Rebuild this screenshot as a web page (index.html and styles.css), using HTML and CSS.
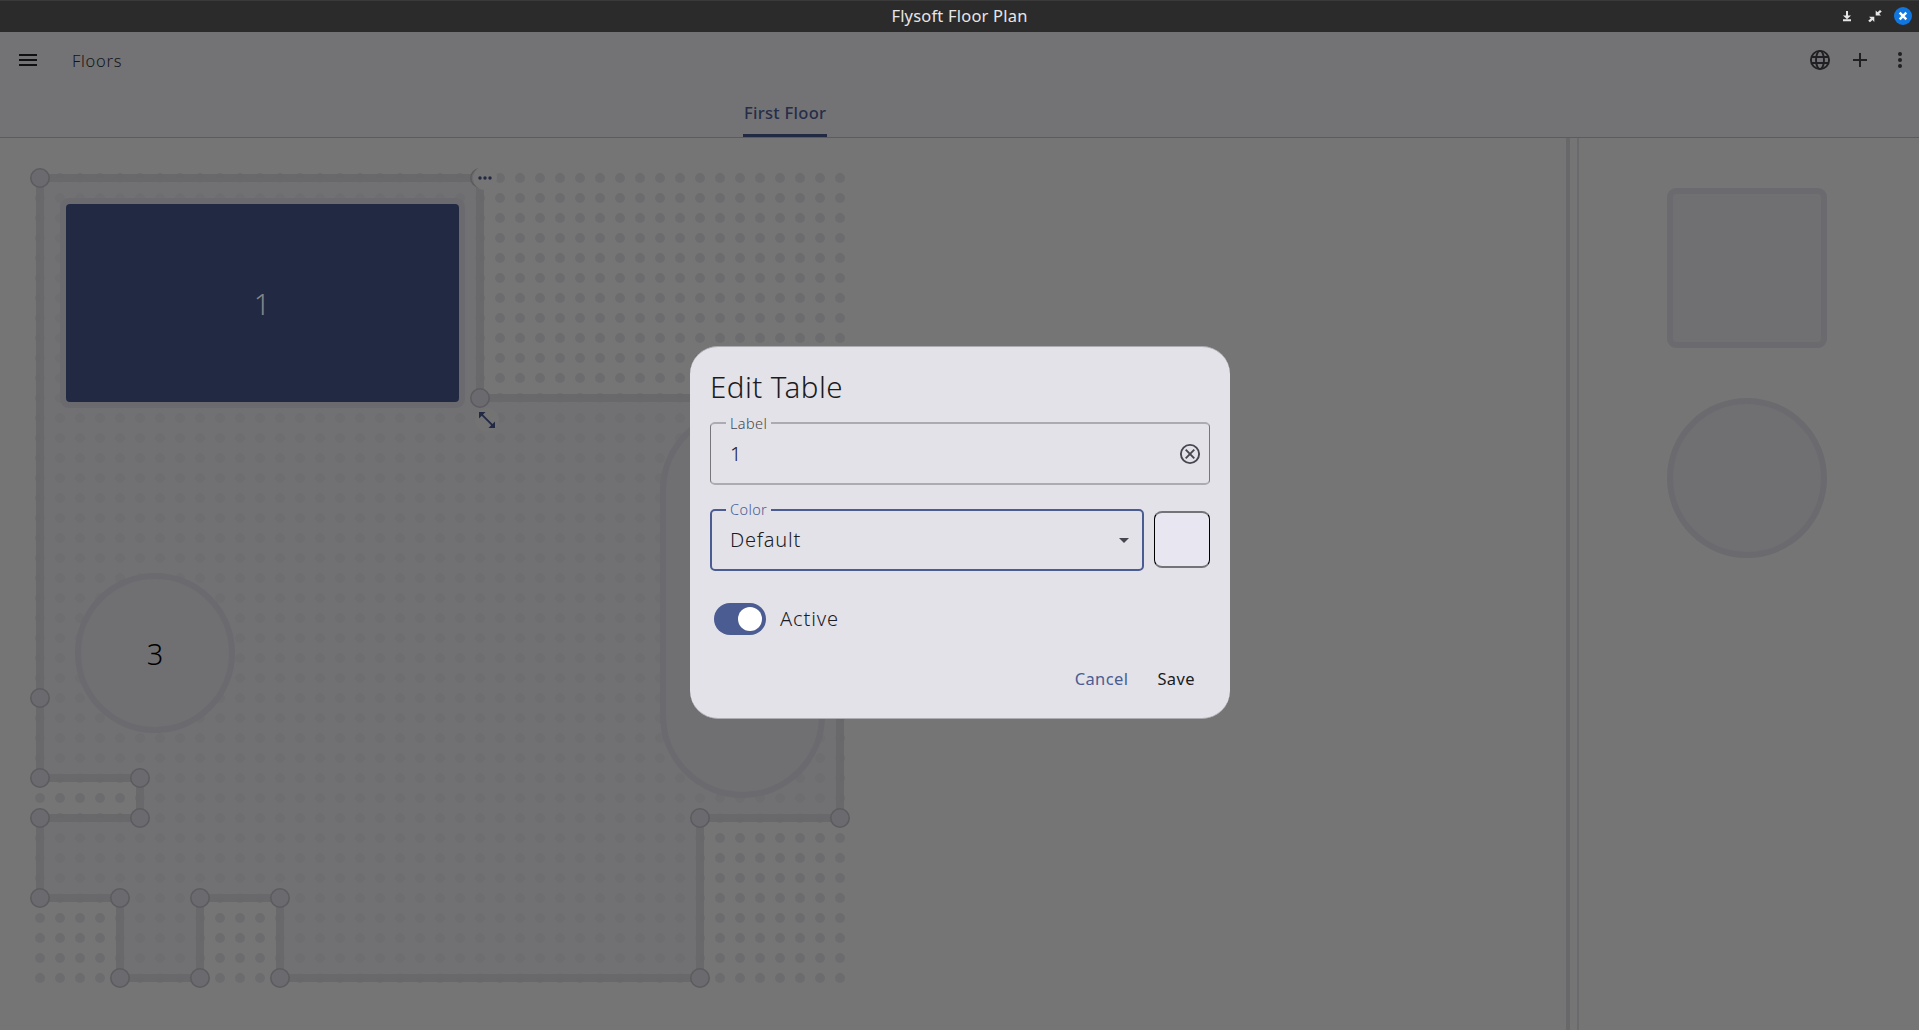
FILE: index.html
```html
<!DOCTYPE html>
<html lang="en">
<head>
<meta charset="utf-8">
<title>Flysoft Floor Plan</title>
<link rel="stylesheet" href="styles.css">
</head>
<body>
<header class="titlebar">
  <span class="titlebar-name">Flysoft Floor Plan</span>
  <div class="window-controls">
    <svg width="18" height="18" viewBox="0 0 18 18"><path d="M8 4h2v4.500h3L9 12.300 5 8.500h3zM5 12.300h8v2H5z"/></svg>
    <svg width="18" height="18" viewBox="0 0 18 18"><path d="M9.700 3.500v5h5.300L13.200 6.800 15.800 4.500 14 3 11.500 5.200zM8.300 15v-5.300H3L4.800 11.400 2.200 13.700 4 15.200 6.500 13z"/></svg>
    <svg width="18" height="18" viewBox="0 0 18 18"><circle class="close-disc" cx="9" cy="9" r="9"/><path class="close-mark" d="M5.700 5.700l6.600 6.600M12.300 5.700l-6.600 6.600"/></svg>
  </div>
</header>
<nav class="appbar">
  <div class="toolbar">
    <svg class="icon" width="24" height="24" viewBox="0 0 24 24"><path d="M3 18h18v-2H3v2zm0-5h18v-2H3v2zm0-7v2h18V6H3z"/></svg>
    <span class="toolbar-title">Floors</span>
    <div class="actions">
      <svg class="icon globe" width="24" height="24" viewBox="0 0 24 24"><circle cx="12" cy="12" r="9.100"/><ellipse cx="12" cy="12" rx="4" ry="9.100"/><path d="M3.500 9h17M3.500 15h17"/></svg>
      <svg class="icon" width="24" height="24" viewBox="0 0 24 24"><path d="M19 13h-6v6h-2v-6H5v-2h6V5h2v6h6v2z"/></svg>
      <svg class="icon" width="24" height="24" viewBox="0 0 24 24"><circle cx="12" cy="6" r="2"/><circle cx="12" cy="12" r="2"/><circle cx="12" cy="18" r="2"/></svg>
    </div>
  </div>
  <div class="tabs"><div class="tab"><span class="tab-text">First Floor</span></div></div>
</nav>
<main class="workspace">
  <svg class="plan" width="1566" height="892" viewBox="0 138 1566 892">
    <defs>
      <pattern id="dots" x="30" y="168" width="20" height="20" patternUnits="userSpaceOnUse"><circle class="dot" cx="10" cy="10" r="5"/></pattern>
    </defs>
    <rect x="30" y="168" width="820" height="820" fill="url(#dots)"/>
    <path class="floor" d="M40 178H480V398H840V818H700V978H280V898H200V978H120V898H40V818H140V778H40Z"/>
    <g class="nodes">
      <circle cx="40" cy="178" r="9.200"/><circle cx="480" cy="178" r="9.200"/><circle cx="480" cy="398" r="9.200"/>
      <circle cx="840" cy="818" r="9.200"/><circle cx="700" cy="818" r="9.200"/><circle cx="700" cy="978" r="9.200"/>
      <circle cx="280" cy="978" r="9.200"/><circle cx="280" cy="898" r="9.200"/><circle cx="200" cy="898" r="9.200"/>
      <circle cx="200" cy="978" r="9.200"/><circle cx="120" cy="978" r="9.200"/><circle cx="120" cy="898" r="9.200"/>
      <circle cx="40" cy="898" r="9.200"/><circle cx="40" cy="818" r="9.200"/><circle cx="140" cy="818" r="9.200"/>
      <circle cx="140" cy="778" r="9.200"/><circle cx="40" cy="778" r="9.200"/><circle cx="40" cy="698" r="9.200"/>
    </g>
    <rect class="table-edge" x="60" y="198" width="405" height="210" rx="9"/>
    <rect class="table-selected" x="66" y="204" width="393" height="198" rx="4"/>
    <text class="table-label on-selected" x="262" y="315">1</text>
    <circle class="table" cx="155" cy="653" r="77"/>
    <text class="table-label" x="155" y="665">3</text>
    <rect class="table" x="663" y="411" width="159" height="384" rx="79.500"/>
    <circle class="handle" cx="485" cy="178" r="12"/>
    <g class="handle-icon"><circle cx="480" cy="178" r="1.700"/><circle cx="485" cy="178" r="1.700"/><circle cx="490" cy="178" r="1.700"/></g>
    <circle class="handle soft" cx="487" cy="420" r="12"/>
    <path class="handle-icon" d="M479 412h6.500l-2.500 2.500 9.500 9.500L495 421.500v6.500h-6.500l2.700-2.700-9.500-9.500L479 418.500z"/>
  </svg>
  <div class="splitter"></div>
  <aside class="palette">
    <div class="shape square"></div>
    <div class="shape round"></div>
  </aside>
</main>
<section class="dialog">
  <h1 class="dialog-title"><span>Edit Table</span></h1>
  <div class="field label-field">
    <span class="field-name name-label">Label</span>
    <span class="value">1</span>
    <svg class="clear" width="24" height="24" viewBox="0 0 24 24"><circle cx="12" cy="12" r="9.100"/><path d="M7.700 7.700l8.600 8.600M16.300 7.700l-8.600 8.600"/></svg>
  </div>
  <div class="color-row">
    <div class="field color-field">
      <span class="field-name name-color">Color</span>
      <span class="value value-default">Default</span>
      <svg width="10" height="5" viewBox="0 0 10 5"><path class="caret" d="M0 0h10L5 5z"/></svg>
    </div>
    <div class="swatch"></div>
  </div>
  <div class="switch-row">
    <div class="switch"><div class="thumb"></div></div>
    <span class="switch-text">Active</span>
  </div>
  <div class="buttons"><span class="cancel">Cancel</span><span class="save">Save</span></div>
</section>
</body>
</html>
```
FILE: styles.css
```css
* { box-sizing: border-box; }
body {
  margin: 0;
  width: 1919px;
  height: 1030px;
  overflow: hidden;
  display: flex;
  flex-direction: column;
  background: #757575;
  font-family: "Noto Sans", sans-serif;
  color: #1b1b21;
}
svg { display: block; flex: none; }
span { white-space: nowrap; }

.titlebar {
  height: 32px;
  flex: none;
  background: #2b2b2b;
  border-top: 1px solid #3a3a3a;
  display: grid;
  grid-template-columns: 1fr auto 1fr;
  align-items: center;
}
.titlebar-name { grid-column: 2; color: #e6e6e6; font-size: 16.500px; letter-spacing: 0.2px; line-height: 28px; padding-bottom: 2px; }
.window-controls { justify-self: end; display: flex; gap: 10px; padding: 0 7px 1px 0; fill: #e6e6e6; }
.close-disc { fill: #1177e0; }
.close-mark { stroke: #fff; stroke-width: 2.400; }

.appbar {
  height: 106px;
  flex: none;
  background: #737375;
  border-bottom: 1px solid #5b5b60;
  display: flex;
  flex-direction: column;
}
.toolbar { height: 56px; display: flex; align-items: center; padding: 0 7px 0 16px; }
.icon { fill: #101013; }
.toolbar-title { margin-left: 32px; padding-top: 1px; font-size: 16.500px; font-weight: 350; letter-spacing: 0.7px; color: #151518; }
.actions { margin-left: auto; display: flex; gap: 16px; }
.actions .icon { fill: #202024; }
.actions .globe { fill: none; stroke: #202024; stroke-width: 1.900; }
.tabs { height: 49px; padding-left: 743px; display: flex; }
.tab { width: 84px; border-bottom: 3px solid #222943; display: flex; justify-content: center; align-items: center; }
.tab-text { padding-top: 4px; color: #262d49; font-size: 16.500px; font-weight: 500; letter-spacing: 0.3px; margin-right: -0.300px; line-height: 42px; }

.workspace { flex: 1; display: flex; min-height: 0; }
.plan { background: #757575; }
.dot { fill: #6c6c6e; }
.floor { fill: #707073; fill-opacity: 0.620; stroke: #68686a; stroke-opacity: 0.920; stroke-width: 8; }
.nodes circle { fill: #6b6a6f; stroke: #5c5c60; stroke-width: 1.600; }
.table { fill: #707072; stroke: #6b6a6f; stroke-width: 6; }
.table-edge { fill: #6b6a6f; }
.table-selected { fill: #222943; }
.table-label { font-size: 29px; font-weight: 350; text-anchor: middle; fill: #000; }
.on-selected { fill: #858587; }
.handle { fill: #757575; }
.soft { fill: #737374; }
.handle-icon { fill: #222943; }

.splitter { width: 13px; flex: none; border-left: 4px solid #68686a; border-right: 2px solid #6a6a6c; }
.palette { flex: 1; display: flex; flex-direction: column; align-items: center; gap: 50px; padding: 50px 5px 0 0; }
.shape { width: 160px; height: 160px; background: #707072; border: 6px solid #6b6a6f; }
.square { border-radius: 9px; }
.round { border-radius: 50%; }

.dialog {
  position: absolute;
  left: 690px;
  top: 346px;
  width: 540px;
  height: 373px;
  padding: 20px;
  border-radius: 28px;
  background: #e3e2e9;
  border-top: 1px solid #adacb0;
  border-bottom: 1px solid #adacb0;
}
.dialog-title { margin: 0; height: 55px; font-size: 29.500px; font-weight: 320; letter-spacing: 0.45px; line-height: 40px; }
.field {
  position: relative;
  height: 63px;
  border-radius: 5px;
  display: flex;
  align-items: center;
  justify-content: space-between;
  padding-left: 20px;
}
.label-field { border: solid #77767e; border-width: 2px 1px; border-top-color: #acabb1; border-bottom-color: #acabb1; padding-right: 7px; }
.color-field { width: 434px; height: 62px; border: 2px solid #4a5c92; padding: 0 13px 0 18px; }
.field-name { position: absolute; top: -13px; left: 15px; padding: 0 4px; font-size: 14.500px; font-weight: 300; letter-spacing: 0.4px; line-height: 22px; background: #e3e2e9; color: #45464f; }
.name-label { top: -12px; }
.name-color { left: 14px; color: #4a5c92; }
.value { font-size: 20px; font-weight: 320; line-height: 26px; margin-left: -1px; }
.value-default { letter-spacing: 0.8px; padding-bottom: 1px; margin-left: 0; }
.clear { fill: none; stroke: #45464f; stroke-width: 1.900; }
.caret { fill: #45464f; }
.color-row { margin-top: 24px; display: flex; justify-content: space-between; }
.swatch { margin-top: 2px; width: 56px; height: 57px; border: solid #000; border-width: 2px 1px; border-top-color: #747379; border-bottom-color: #747379; border-radius: 8px; background: #e8e6f1; }
.switch-row { margin: 32px 0 0 4px; display: flex; align-items: center; gap: 14px; height: 32px; }
.switch { width: 52px; height: 32px; border-radius: 16px; background: #4a5c92; display: flex; align-items: center; justify-content: flex-end; padding-right: 4px; }
.thumb { width: 24px; height: 24px; border-radius: 50%; background: #fff; }
.switch-text { font-size: 20px; font-weight: 320; letter-spacing: 0.9px; line-height: 28px; padding-bottom: 1px; }
.buttons { margin-top: 32px; display: flex; justify-content: flex-end; gap: 29px; padding-right: 15px; font-size: 16.500px; letter-spacing: 0.4px; line-height: 24px; }
.cancel { color: #4a5c92; }
```
